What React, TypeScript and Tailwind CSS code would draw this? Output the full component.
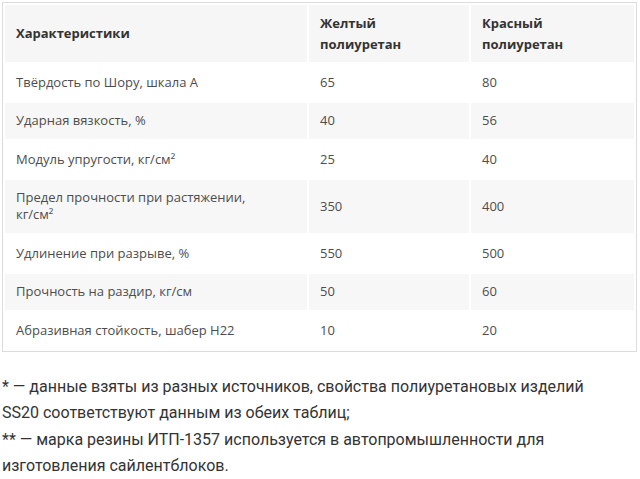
const rows: { k: React.ReactNode; a: string; b: string }[] = [
  { k: "Твёрдость по Шору, шкала А", a: "65", b: "80" },
  { k: "Ударная вязкость, %", a: "40", b: "56" },
  { k: "Модуль упругости, кг/см²", a: "25", b: "40" },
  {
    k: (
      <>
        Предел прочности при растяжении,
        <br />
        кг/см²
      </>
    ),
    a: "350",
    b: "400",
  },
  { k: "Удлинение при разрыве, %", a: "550", b: "500" },
  { k: "Прочность на раздир, кг/см", a: "50", b: "60" },
  { k: "Абразивная стойкость, шабер Н22", a: "10", b: "20" },
];

export default function App() {
  return (
    <div className="bg-white w-[640px] h-[479px] overflow-hidden pt-[2px] pl-[2px]">
      <table className="table-fixed border-separate border-spacing-[2px] border border-[#dcdcdc] w-[635px] font-['Open_Sans',sans-serif] text-[13px]">
        <colgroup>
          <col className="w-[302px]" />
          <col className="w-[160px]" />
          <col className="w-[163px]" />
        </colgroup>
        <thead>
          <tr className="bg-[#f6f6f6] text-[#333] font-bold text-left">
            <th className="px-[11px] py-[7.5px] leading-[21px] align-middle">Характеристики</th>
            <th className="px-[11px] py-[7.5px] leading-[21px] align-middle">
              Желтый
              <br />
              полиуретан
            </th>
            <th className="px-[11px] py-[7.5px] leading-[21px] align-middle">
              Красный
              <br />
              полиуретан
            </th>
          </tr>
        </thead>
        <tbody className="text-[#4d4d4d]">
          {rows.map((r, i) => (
            <tr key={i} className={i % 2 === 1 ? "bg-[#f7f7f7]" : "bg-white"}>
              <td className="px-[11px] py-[9.75px] leading-[17px] align-middle">{r.k}</td>
              <td className="px-[11px] py-[9.75px] leading-[17px] align-middle">{r.a}</td>
              <td className="px-[11px] py-[9.75px] leading-[17px] align-middle">{r.b}</td>
            </tr>
          ))}
        </tbody>
      </table>

      <div className="mt-[22px] pr-[20px] font-['Roboto',sans-serif] text-[16px] leading-[26.5px] text-[#333]">
        <p>* — данные взяты из разных источников, свойства полиуретановых изделий SS20 соответствуют данным из обеих таблиц;</p>
        <p>** — марка резины ИТП-1357 используется в автопромышленности для изготовления сайлентблоков.</p>
      </div>
    </div>
  );
}
